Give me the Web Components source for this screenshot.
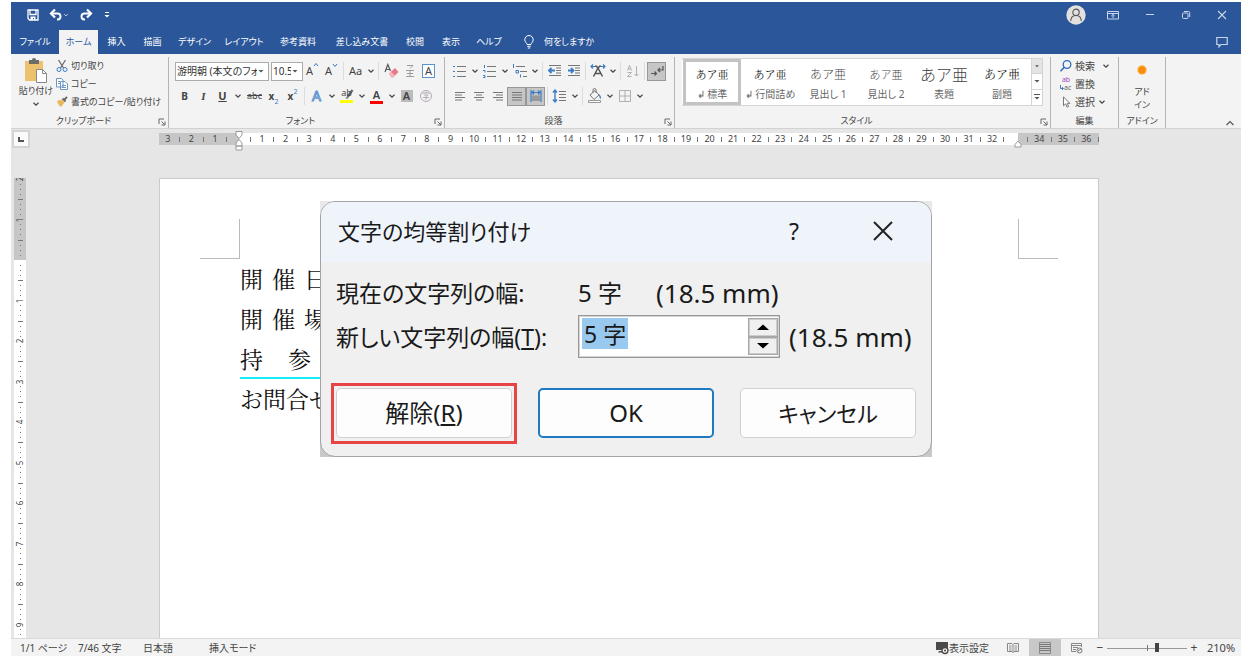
<!DOCTYPE html>
<html lang="ja">
<head>
<meta charset="utf-8">
<title>Word - 文字の均等割り付け</title>
<style>
  body { margin: 0; background: #fff; color: #444; font: 10px/14px "Noto Sans", "Noto Sans CJK JP", sans-serif; font-feature-settings: "palt"; }
</style>
</head>
<body>
<word-app></word-app>

<script>
const RESET = `
  *, *::before, *::after { box-sizing: border-box; }
  button { appearance: none; border: 0; padding: 0; margin: 0; background: none; color: inherit; font: inherit; font-feature-settings: inherit; cursor: default; white-space: nowrap; }
  svg { display: block; flex: none; fill: none; }
`;
class Base extends HTMLElement {
  connectedCallback() {
    if (this.shadowRoot) return;
    const t = document.createElement('template');
    t.innerHTML = `<style>${RESET}${this.css ? this.css() : ''}</style>${this.html()}`;
    this.attachShadow({ mode: 'open' }).append(t.content.cloneNode(true));
  }
  attr(n, d = '') { return this.getAttribute(n) ?? d; }
}

/* ---------- icons ---------- */
const B = '#3b7cc4';
const lines = (x1, x2, ys, c = '#777') => `<path stroke="${c}" d="${ys.map(y => `M${x1} ${y}H${x2}`).join('')}"/>`;
const ICONS = {
  save: ['0 0 12 12', `<path stroke="#fff" stroke-width="1.3" d="M1 1h10v10H2.500L1 9.500zM3 1v4.500h6V1"/><path fill="#fff" d="M3.500 7.500h5V11H7V9H6v2H3.500z"/>`],
  undo: ['0 0 14 14', `<path stroke="#fff" stroke-width="1.900" d="M2 5.500h6.500a3 3 0 0 1 0 6H8"/><path stroke="#fff" stroke-width="2.200" d="M6 1.500l-4 4 4 4"/>`],
  redo: ['0 0 14 14', `<path stroke="#fff" stroke-width="1.900" d="M12 5.500H5.500a3 3 0 0 0 0 6H6"/><path stroke="#fff" stroke-width="2.200" d="M8 1.500l4 4-4 4"/>`],
  more: ['0 0 8 8', `<path stroke="#fff" d="M2 1.500h4"/><path fill="#fff" d="M1.500 4h5L4 6.500z"/>`],
  chev: ['0 0 8 8', `<path stroke="currentColor" stroke-width="1.200" d="M1.500 2.800L4 5.200l2.500-2.400"/>`],
  caret: ['0 0 8 8', `<path fill="#555" d="M1.500 3h5L4 5.500z"/>`],
  caretbar: ['0 0 8 8', `<path stroke="#555" d="M1 1.500h6"/><path fill="#555" d="M1.500 4h5L4 6.500z"/>`],
  up: ['0 0 10 10', `<path stroke="#555" stroke-width="1.200" d="M1.500 7L5 3.500 8.500 7"/>`],
  user: ['0 0 20 20', `<circle cx="10" cy="10" r="9.700" fill="#e3e1df"/><circle cx="10" cy="7.300" r="3.200" stroke="#555" stroke-width="1.100"/><path stroke="#555" stroke-width="1.100" d="M4.800 16c0-3.800 2.200-5.500 5.200-5.500s5.200 1.700 5.200 5.500"/>`],
  ribbonopt: ['0 0 12 12', `<path stroke="#c8d5ea" d="M.5 2.500h11v7.500H.500zM.5 4.500h11M6 9V5.500M4.300 7L6 5.500 7.700 7"/>`],
  min: ['0 0 10 10', `<path stroke="#c8d5ea" d="M1 4.500h8"/>`],
  restore: ['0 0 10 10', `<rect x="1.500" y="3" width="5.500" height="5.500" rx="1" stroke="#c8d5ea"/><path stroke="#c8d5ea" d="M3 1.500h4.500a1.200 1.200 0 0 1 1.200 1.200V7"/>`],
  close: ['0 0 10 10', `<path stroke="#c8d5ea" stroke-width="1.100" d="M1 1l8 8M9 1L1 9"/>`],
  comment: ['0 0 12 12', `<path stroke="#c8d5ea" stroke-width="1.200" d="M.800 1.500h10.400v7H5L3 10.800V8.500H.800z"/>`],
  bulb: ['0 0 12 14', `<path stroke="#fff" d="M4 9.500C4 8 1.800 7.200 1.800 4.700a4.200 4.200 0 0 1 8.400 0C10.200 7.200 8 8 8 9.500zM4.300 11.300h3.400M4.800 13h2.400"/>`],
  paste: ['0 0 24 26', `<path fill="#ecc26e" d="M1 3h18v20H1z"/><path fill="#6b6b6b" d="M5 2h3a2 2 0 0 1 4 0h3v4H5z"/><path fill="#fff" stroke="#888" d="M12.500 11.500h6l4 4v9h-10z"/><path stroke="#888" d="M18.500 11.500v4h4"/>`],
  cut: ['0 0 12 12', `<path stroke="#666" stroke-width="1.200" d="M2.500 0l5 8M9.500 0l-5 8"/><circle cx="3" cy="9.500" r="2" stroke="${B}"/><circle cx="9" cy="9.500" r="2" stroke="${B}"/>`],
  copy: ['0 0 12 12', `<path fill="#fff" stroke="#6d95c6" d="M.500 .500h5l1.500 1.500v7H.500zM4.500 3.500H9l2.500 2.500v5.500h-7z"/><path stroke="#6d95c6" d="M2 3.500h2M2 5.500h2M6 7.500h4M6 9.500h4"/>`],
  brush: ['0 0 12 12', `<path fill="#ecb75a" d="M1 5l4.500-1.500 3 3L5 11C3.500 10 1.500 8 1 5z"/><path stroke="#666" stroke-width="1.800" d="M6.500 2.500l3 3M8 4l3-3"/>`],
  launcher: ['0 0 8 8', `<path stroke="#666" d="M1 6V1h5"/><path stroke="#666" d="M3.500 3.500L7 7M7 3.500V7H3.500"/>`],
  search: ['0 0 12 12', `<circle cx="7" cy="4.500" r="3.800" stroke="#2b6cb8" stroke-width="1.300"/><path stroke="#2b6cb8" stroke-width="1.500" d="M4.300 7.200L.500 11.300"/>`],
  cursor: ['0 0 12 12', `<path stroke="#777" fill="#fff" d="M3.500 .800v9l2.200-2 1.400 3.400 1.500-.7-1.400-3.100h2.600z"/>`],
  hook: ['0 0 4 6', `<path stroke="${B}" d="M.500 0v3.500H3M2 2l1.500 1.500L2 5"/>`],
  dot: ['0 0 12 12', `<circle cx="6" cy="6" r="4.700" fill="#ffb84d"/><circle cx="6" cy="6" r="3.700" fill="#f98c0a"/>`],
  grow: ['0 0 6 6', `<path stroke="${B}" d="M1 4l2-2.500L5 4"/>`],
  shrink: ['0 0 6 6', `<path stroke="${B}" d="M1 2l2 2.500L5 2"/>`],
  eraser: ['0 0 16 16', `<path stroke="#555" stroke-width="1.200" d="M2 9L4.800 1.500 7.500 8M3 6.500h3.500"/><path fill="#e8798a" d="M6 10.500l6-5.500 3.500 4-5.500 5.500H8.500z"/><path fill="#f6b6bf" d="M6 10.500L8 8.600l3.700 4-1.700 1.900H8.500z"/>`],
  ruby: ['0 0 16 16', `<path stroke="#9b9b9b" d="M5 2.500h6L8 5.500M4 7.500h8M5 10.500h6M4 13.500h8M8 7v7"/>`],
  marker: ['0 0 16 16', `<path stroke="#666" stroke-width="2.200" d="M13.500 2L8.500 9"/><path fill="#777" d="M6 10l3.500-1.500L8.500 11z"/><path fill="#ffff00" d="M1 12h13v3H1z"/>`],
  bullets: ['0 0 16 16', `<path fill="${B}" d="M1 3h2v1H1zM1 8h2v1H1zM1 13h2v1H1z"/>` + lines(5, 14, [3.5, 8.5, 13.5])],
  numbers: ['0 0 16 16', `<path stroke="${B}" d="M2.500 2v3M1 7.500h2v2M1 12.500h2v2H1"/>` + lines(5, 14, [3.5, 8.5, 13.5])],
  multi: ['0 0 16 16', `<path stroke="${B}" d="M1.500 1v4M4 7.500h2.500V10H4zM8.500 11.500v3"/>` + lines(4, 13, [3.5]) + lines(8, 15, [8.5]) + lines(11, 15, [13.5])],
  outdent: ['0 0 16 16', lines(2, 14, [2.5, 12.5]) + lines(9, 14, [5, 7.5, 10]) + `<path stroke="${B}" stroke-width="1.800" d="M8 7.500H2M4.500 5L2 7.500 4.500 10"/>`],
  indent: ['0 0 16 16', lines(2, 14, [2.5, 12.5]) + lines(9, 14, [5, 7.5, 10]) + `<path stroke="${B}" stroke-width="1.800" d="M2 7.500h5.500M5 5l2.500 2.500L5 10"/>`],
  scale: ['0 0 16 16', `<path stroke="${B}" stroke-width="1.200" d="M1 3.500h5M10 3.500h5M3 1.500l-2 2 2 2M13 1.500l2 2-2 2"/><path stroke="#555" stroke-width="1.500" d="M3.500 13.500L8 5l4.500 8.500M5.500 10.500h5M8 5L5.500 2.500M8 5l2.500-2.500"/>`],
  sort: ['0 0 16 16', `<path stroke="#b0b0b0" d="M2.500 7.500l2-5 2 5M3 6h3M2.500 9.500h4L2.500 13.500h4M11.500 3v10M9.500 11l2 2 2-2"/>`],
  mark: ['0 0 16 16', `<path stroke="#555" stroke-width="1.200" d="M14 3v4H9M11 5L9 7l2 2M2 10.500h5M5.500 8.500l2 2-2 2"/>`],
  left: ['0 0 16 16', lines(3, 13, [4.5, 9.5]) + lines(3, 10, [7, 12])],
  center: ['0 0 16 16', lines(3, 13, [4.5, 9.5]) + lines(5, 11, [7, 12])],
  right: ['0 0 16 16', lines(3, 13, [4.5, 9.5]) + lines(6, 13, [7, 12])],
  justify: ['0 0 16 16', lines(3, 13, [4.5, 7, 9.5, 12])],
  distribute: ['0 0 16 16', `<path stroke="${B}" stroke-width="1.200" d="M3 2v12M13 2v12M4 4.500h8M6 2.500l-2 2 2 2M10 2.500l2 2-2 2"/><path fill="#999" d="M4 7.500h8V13H4z"/>`],
  spacing: ['0 0 16 16', `<path stroke="${B}" stroke-width="1.400" d="M3 2v12M1 4.500L3 2l2 2.500M1 11.500L3 14l2-2.500"/>` + lines(7, 14, [3.5, 6.5, 9.5, 12.5])],
  paint: ['0 0 16 16', `<path stroke="#777" d="M3 7l5-4.500L12 7l-5 4.500zM6 5V2a1.500 1.500 0 0 1 3 0v3"/><path fill="${B}" d="M12 6c2 2 2.500 3.500 1.500 5-1-.5-1.500-3-1.500-5z"/><path stroke="#999" fill="#fff" d="M1.500 12.500h12v2h-12z"/>`],
  border: ['0 0 16 16', `<path stroke="#b0b0b0" d="M2.500 2.500h11v11h-11zM8 2.500v11M2.500 8h11"/>`],
  circlechar: ['0 0 16 16', `<circle cx="8" cy="8" r="5.500" stroke="#b5acb5"/><path stroke="#b5acb5" d="M5 6V5h6v1M8 3.500V5M6 7h4L8 8.500V12M5 9.500h6"/>`],
  monitor: ['0 0 14 14', `<path fill="#4a4a4a" d="M1 1h12v8H1zM4 10h4v1.500H3z"/><circle cx="10" cy="9.500" r="3" fill="#eee" stroke="#4a4a4a" stroke-width="1.300"/><circle cx="10" cy="9.500" r="1" fill="#4a4a4a"/>`],
  read: ['0 0 12 12', `<path stroke="#888" d="M.500 1.500h4.500l1 1 1-1h4.500v8H7l-1 1-1-1H.500zM6 2.500v8M2 4h2.500M2 6h2.500M2 8h2.500M7.500 4H10M7.500 6H10M7.500 8H10"/>`],
  print: ['0 0 12 12', `<path stroke="#888" d="M.500 .500h11v11H.500z"/><path stroke="#777" d="M1 2.500h10M1 4.500h10M1 6.500h10M1 8.500h10"/>`],
  web: ['0 0 12 12', `<path stroke="#888" d="M5 9.500H.500v-8h10V5M.500 3.500h10M2 5.500h5M2 7.500h3"/><circle cx="8.500" cy="8.500" r="2.500" stroke="#777"/><path stroke="#777" d="M7 9l3-2"/>`],
  bigclose: ['0 0 24 24', `<path stroke="#222" stroke-width="2" d="M3 3l18 18M21 3L3 21"/>`],
  spinup: ['0 0 16 8', `<path fill="#000" d="M2 7l6-5.500L14 7z"/>`],
  spindown: ['0 0 16 8', `<path fill="#000" d="M2 1l6 5.500L14 1z"/>`],
  tabstop: ['0 0 8 8', `<path stroke="#555" stroke-width="2" d="M2 2v4h5"/>`],
  indentmark: ['0 0 8 20', `<path fill="#fff" stroke="#999" d="M1 .500h6V4L4 7.500 1 4zM1 15v-3l3-3.500L7 12v3zM1 15h6v4H1z"/>`],
  indentright: ['0 0 8 8', `<path fill="#fff" stroke="#999" d="M1 7V4.500L4 1l3 3.500V7z"/>`],
};
customElements.define('ui-icon', class extends Base {
  css() { return `:host { display: block; flex: none; }`; }
  html() {
    const [vb, body] = ICONS[this.attr('name')];
    const [, , w, h] = vb.split(' ');
    return `<svg viewBox="${vb}" width="${this.attr('w', w)}" height="${this.attr('h', h)}" aria-hidden="true">${body}</svg>`;
  }
});

/* ---------- title bar ---------- */
customElements.define('title-bar', class extends Base {
  css() { return `
    :host { display: flex; justify-content: space-between; height: 28px; background: #2b579a; color: #c8d5ea; }
    div { display: flex; align-items: center; padding-bottom: 2px; }
    .quick { padding-left: 16px; gap: 10px; }
    .quick button { display: flex; align-items: center; }
    .win { padding-right: 14px; gap: 21px; }
    .win button:not(:first-child, :last-child) { padding-right: 5px; }`; }
  html() { return `
    <div class="quick">
      <button aria-label="保存"><ui-icon name="save"></ui-icon></button>
      <button aria-label="元に戻す"><ui-icon name="undo"></ui-icon><ui-icon name="chev" w="6" h="6"></ui-icon></button>
      <button aria-label="やり直し"><ui-icon name="redo"></ui-icon></button>
      <button aria-label="カスタマイズ"><ui-icon name="more"></ui-icon></button>
    </div>
    <div class="win">
      <button aria-label="アカウント"><ui-icon name="user"></ui-icon></button>
      <button aria-label="リボンの表示オプション"><ui-icon name="ribbonopt"></ui-icon></button>
      <button aria-label="最小化"><ui-icon name="min"></ui-icon></button>
      <button aria-label="元に戻す (縮小)"><ui-icon name="restore"></ui-icon></button>
      <button aria-label="閉じる"><ui-icon name="close"></ui-icon></button>
    </div>`; }
});

/* ---------- ribbon tabs ---------- */
customElements.define('ribbon-tabs', class extends Base {
  css() { return `
    :host { display: flex; justify-content: space-between; height: 24px; background: #2b579a; color: #fff; font-size: 9px; }
    nav { display: grid; grid-template-columns: 48px 39px 37px 35px 49px 50px 58px 70px 36px 36px 40px auto; }
    button[aria-selected=true] { background: #f3f3f3; color: #2b579a; }
    .tell { display: flex; align-items: center; gap: 9px; padding-left: 14px; }
    .note { padding-right: 13px; }`; }
  html() {
    const tabs = ['ファイル','ホーム','挿入','描画','デザイン','レイアウト','参考資料','差し込み文書','校閲','表示','ヘルプ'];
    return `<nav role="tablist">${tabs.map((t, i) => `<button role="tab" aria-selected="${i === 1}">${t}</button>`).join('')}
      <button class="tell"><ui-icon name="bulb"></ui-icon>何をしますか</button></nav>
      <button class="note" aria-label="コメント"><ui-icon name="comment"></ui-icon></button>`; }
});

/* ---------- ribbon parts ---------- */
customElements.define('ribbon-group', class extends Base {
  css() { return `
    :host { display: flex; flex-direction: column; height: 71px; border-right: 1px solid #b4b4b4; }
    .body { flex: 1; display: flex; min-width: 0; }
    footer { display: flex; align-items: center; height: 14px; font-size: 9px; }
    footer span { flex: 1; text-align: center; white-space: nowrap; }
    footer button { width: 12px; display: grid; place-items: center; padding-top: 2px; }`; }
  html() { return `<div class="body"><slot></slot></div>
    <footer><span>${this.attr('label')}</span>${this.hasAttribute('launcher') ? `<button aria-label="${this.attr('label')}の設定"><ui-icon name="launcher"></ui-icon></button>` : ''}</footer>`; }
});
customElements.define('tool-row', class extends Base {
  css() { return `:host { display: flex; align-items: center; height: 20px; }`; }
  html() { return `<slot></slot>`; }
});
customElements.define('tool-sep', class extends Base {
  css() { return `:host { width: 1px; height: 18px; margin: 0 2px; background: #dcdcdc; }`; }
  html() { return ``; }
});
customElements.define('tool-button', class extends Base {
  css() { return `
    :host { display: block; flex: none; }
    button { display: flex; align-items: center; height: 19px; font-size: 11px; line-height: 16px; }
    .face { display: flex; align-items: center; justify-content: center; width: 19px; height: 19px; }
    :host([split]) .chev { width: 11px; display: grid; place-items: center; }
    :host([on]) .face { background: #c6c6c6; border: 1px solid #979797; }`; }
  html() {
    const icon = this.attr('icon');
    return `<button aria-label="${this.attr('label')}"><span class="face"><slot></slot>${icon ? `<ui-icon name="${icon}"></ui-icon>` : ''}</span>${this.hasAttribute('split') ? '<span class="chev"><ui-icon name="chev"></ui-icon></span>' : ''}</button>`; }
});
customElements.define('combo-box', class extends Base {
  css() { return `
    :host { display: grid; grid-template-columns: 1fr 11px; align-items: center; width: ${this.attr('w')}px; height: 19px; flex: none; background: #fff; border: 1px solid #ababab; }
    select { grid-row: 1; grid-column: 1; width: 100%; min-width: 0; height: 17px; appearance: none; border: 0; margin: 0; padding: 0 0 0 1px; background: none; color: #333; font: inherit; font-feature-settings: inherit; overflow: hidden; text-overflow: clip; }`; }
  html() { return `<select aria-label="${this.attr('label')}"><option>${this.attr('value')}</option></select><ui-icon name="caret"></ui-icon>`; }
});
customElements.define('text-command', class extends Base {
  css() { return `
    :host { display: block; }
    button { display: flex; align-items: center; height: 18px; gap: 3px; }
    .chev { padding-left: ${this.attr('chevgap', '2')}px; }`; }
  html() { return `<button><slot name="icon"><ui-icon name="${this.attr('icon', 'copy')}"></ui-icon></slot><slot></slot>${this.hasAttribute('chevgap') ? '<span class="chev"><ui-icon name="chev"></ui-icon></span>' : ''}</button>`; }
});
customElements.define('style-card', class extends Base {
  css() { return `
    :host { display: block; width: 58px; }
    button { display: flex; flex-direction: column; align-items: center; justify-content: center; gap: 5px; width: 100%; height: 46px; padding-top: 3px; border: 3px solid transparent; }
    :host([selected]) button { border-color: #c3c3c3; }
    b { font-family: "Noto Serif CJK JP", "Noto Sans CJK JP", serif; font-weight: 400; color: #222; font-size: ${this.attr('size', '11')}px; height: 16px; line-height: 16px; font-feature-settings: normal; }
    .light { font-family: "Noto Sans CJK JP", sans-serif; color: #444; font-weight: 300; }
    span { color: #666; }`; }
  html() { return `<button><b class="${this.hasAttribute('light') ? 'light' : ''}">あア亜</b><span><slot></slot></span></button>`; }
});

customElements.define('ribbon-bar', class extends Base {
  css() { return `
    :host { display: flex; background: #f3f3f3; border-bottom: 1px solid #d2d2d2; padding-top: 3px; }
    .clip { width: 158px; font-size: 9px; } .font { width: 276px; } .para { width: 230px; } .styles { width: 376px; } .edit { width: 68px; } .addin { width: 47px; }
    .tools { display: flex; flex-direction: column; gap: 5px; padding: 4px 0 0 6px; }
    .para .tools { padding-left: 5px; }
    .paste { display: flex; flex-direction: column; align-items: center; width: 38px; margin: 1px 1px 0 6px; }
    .paste ui-icon:last-child { margin-top: 2px; }
    .rows { padding-left: 9px; }
    .clip .rows { padding-left: 0; }
    .gap { width: 2px; }
    b.s { font-size: 10px; }
    i { font-family: "Liberation Serif", serif; font-weight: 700; }
    u { font-weight: 700; } s { font-size: 9px; }
    sub, sup { color: #3b7cc4; font-size: 7px; line-height: 9px; }
    sub { align-self: flex-end; } sup { align-self: flex-start; }
    .fx { color: #fff; -webkit-text-stroke: 1px #5b93d0; font-size: 14px; }
    .clr { border-bottom: 3px solid #f00; line-height: 12px; padding: 0 3px; font-weight: 600; }
    .box { border: 1px solid #5b93d0; background: #fff; width: 13px; line-height: 12px; text-align: center; }
    .shade { background: #bbb; width: 12px; line-height: 12px; text-align: center; font-weight: 600; }
    .hl { display: grid; } .hl > * { grid-area: 1 / 1; } .hl span { font-size: 9px; line-height: 10px; }
    .gallery { display: flex; height: 48px; margin: 1px 0 0 7px; padding: 0 0 0 1px; border: 1px solid #d4d4d4; background: #fff; border-width: 1px 0; }
    .scroll { display: grid; grid-template-rows: repeat(3, 1fr); width: 12px; border: 1px solid #d4d4d4; border-width: 0 1px; }
    .scroll button { display: grid; place-items: center; border-bottom: 1px solid #d4d4d4; overflow: hidden; }
    .scroll button:first-child { background: #e4e4e4; }
    .scroll button:last-child { border: 0; }
    .rep { display: flex; flex-direction: column; font-size: 7px; line-height: 8px; width: 12px; color: #666; } .rep em { font-style: normal; color: #a349c2; }
    .rep span { display: flex; align-items: center; }
    .app { display: flex; flex-direction: column; align-items: center; width: 100%; padding-top: 7px; font-size: 9px; }
    .app span { line-height: 13px; } .app span:first-of-type { margin-top: 9px; }
    .rest { flex: 1; display: flex; justify-content: flex-end; align-items: flex-end; padding-right: 6px; }`; }
  html() { return `
    <ribbon-group class="clip" label="クリップボード" launcher>
      <button class="paste"><ui-icon name="paste"></ui-icon>貼り付け<ui-icon name="chev"></ui-icon></button>
      <div class="rows">
        <text-command icon="cut">切り取り</text-command>
        <text-command icon="copy">コピー</text-command>
        <text-command icon="brush">書式のコピー/貼り付け</text-command>
      </div>
    </ribbon-group>
    <ribbon-group class="font" label="フォント" launcher>
      <div class="tools">
        <tool-row>
          <combo-box w="94" label="フォント" value="游明朝 (本文のフォント)"></combo-box><span class="gap"></span>
          <combo-box w="32" label="フォント サイズ" value="10.5"></combo-box>
          <tool-button label="フォントの拡大">A<ui-icon name="grow" style="align-self:flex-start"></ui-icon></tool-button>
          <tool-button label="フォントの縮小">A<ui-icon name="shrink" style="align-self:flex-start"></ui-icon></tool-button><tool-sep></tool-sep>
          <tool-button split label="文字種の変換"><span>Aa</span></tool-button><tool-sep></tool-sep>
          <tool-button icon="eraser" label="書式のクリア"></tool-button>
          <tool-button icon="ruby" label="ルビ"></tool-button>
          <tool-button label="囲み線"><span class="box">A</span></tool-button>
        </tool-row>
        <tool-row>
          <tool-button label="太字"><b class="s">B</b></tool-button>
          <tool-button label="斜体"><i>I</i></tool-button>
          <tool-button split label="下線"><u>U</u></tool-button><span class="gap"></span>
          <tool-button label="取り消し線"><s>abc</s></tool-button>
          <tool-button label="下付き"><b class="s">x</b><sub>2</sub></tool-button>
          <tool-button label="上付き"><b class="s">x</b><sup>2</sup></tool-button><tool-sep></tool-sep>
          <tool-button split label="文字の効果"><span class="fx">A</span></tool-button>
          <tool-button split label="蛍光ペン"><span class="hl"><ui-icon name="marker"></ui-icon><span>ab</span></span></tool-button>
          <tool-button split label="フォントの色"><span class="clr">A</span></tool-button>
          <tool-button label="文字の網かけ"><span class="shade">A</span></tool-button>
          <tool-button icon="circlechar" label="囲い文字"></tool-button>
        </tool-row>
      </div>
    </ribbon-group>
    <ribbon-group class="para" label="段落" launcher>
      <div class="tools">
        <tool-row>
          <tool-button split icon="bullets" label="箇条書き"></tool-button>
          <tool-button split icon="numbers" label="段落番号"></tool-button>
          <tool-button split icon="multi" label="アウトライン"></tool-button><tool-sep></tool-sep>
          <tool-button icon="outdent" label="インデントを減らす"></tool-button>
          <tool-button icon="indent" label="インデントを増やす"></tool-button><tool-sep></tool-sep>
          <tool-button split icon="scale" label="拡張書式"></tool-button><tool-sep></tool-sep>
          <tool-button icon="sort" label="並べ替え"></tool-button><tool-sep></tool-sep>
          <tool-button on icon="mark" label="編集記号の表示"></tool-button>
        </tool-row>
        <tool-row>
          <tool-button icon="left" label="左揃え"></tool-button>
          <tool-button icon="center" label="中央揃え"></tool-button>
          <tool-button icon="right" label="右揃え"></tool-button>
          <tool-button on icon="justify" label="両端揃え"></tool-button>
          <tool-button on icon="distribute" label="均等割り付け"></tool-button><tool-sep></tool-sep>
          <tool-button split icon="spacing" label="行間"></tool-button><tool-sep></tool-sep>
          <tool-button split icon="paint" label="塗りつぶし"></tool-button>
          <tool-button split icon="border" label="罫線"></tool-button>
        </tool-row>
      </div>
    </ribbon-group>
    <ribbon-group class="styles" label="スタイル" launcher>
      <div class="gallery">
        <style-card selected>↲ 標準</style-card><style-card>↲ 行間詰め</style-card>
        <style-card light size="12">見出し 1</style-card><style-card light>見出し 2</style-card>
        <style-card light size="16">表題</style-card><style-card size="12">副題</style-card>
        <div class="scroll"><button aria-label="前の行"><ui-icon name="caret" w="6" h="6"></ui-icon></button><button aria-label="次の行"><ui-icon name="caret"></ui-icon></button><button aria-label="その他"><ui-icon name="caretbar"></ui-icon></button></div>
      </div>
    </ribbon-group>
    <ribbon-group class="edit" label="編集">
      <div class="rows">
        <text-command icon="search" chevgap="4">検索</text-command>
        <text-command><span slot="icon" class="rep"><em>ab</em><span><ui-icon name="hook"></ui-icon>ac</span></span>置換</text-command>
        <text-command icon="cursor" chevgap="0">選択</text-command>
      </div>
    </ribbon-group>
    <ribbon-group class="addin" label="アドイン">
      <button class="app"><ui-icon name="dot"></ui-icon><span>アド</span><span>イン</span></button>
    </ribbon-group>
    <div class="rest"><button aria-label="リボンを折りたたむ"><ui-icon name="up"></ui-icon></button></div>`; }
});

/* ---------- rulers ---------- */
customElements.define('h-ruler', class extends Base {
  css() { return `
    :host { display: block; position: relative; width: 940px; height: 12px; background: linear-gradient(to right, #c6c6c6 80px, #fff 80px, #fff 859px, #c6c6c6 859px); }
    .marks { display: grid; grid-template-columns: repeat(80, 1fr); margin: 0 -5px 0 3px; }
    .marks span { display: flex; justify-content: center; align-items: center; min-width: 0; height: 12px; font-size: 9px; line-height: 12px; white-space: nowrap; }
    .tick::before { content: ""; width: 1px; height: 5px; background: #777; }
    .l, .r { position: absolute; } .l { left: 76px; top: -2px; } .r { left: 855px; top: 7px; }`; }
  html() {
    let s = '';
    for (let n = -3; n <= 36; n++) s += `<span>${n === 0 || n === 33 ? '' : Math.abs(n)}</span><span class="tick"></span>`;
    return `<div class="marks">${s}</div><ui-icon class="l" name="indentmark"></ui-icon><ui-icon class="r" name="indentright"></ui-icon>`; }
});
customElements.define('v-ruler', class extends Base {
  css() { return `
    :host { display: block; width: 12px; overflow: hidden; background: linear-gradient(#c6c6c6 82px, #fff 82px); }
    .marks { display: grid; grid-auto-rows: 40px 41px; margin-top: -19px; height: 0; }
    .marks div { display: grid; } .marks div > * { grid-area: 1 / 1; }
    span { place-self: center; font-size: 8px; line-height: 10px; transform: rotate(-90deg); }`; }
  html() {
    const last = Math.floor((innerHeight - 281) / 40.5);
    let s = '';
    for (let n = -2; n <= last; n++) s += `<div><svg width="12" height="40"><path stroke="#777" d="M4 .500h5M6 5.500h1M6 10.500h1M6 15.500h1M6 25.500h1M6 30.500h1M6 35.500h1"/></svg><span>${n ? Math.abs(n) : ''}</span></div>`;
    return `<div class="marks">${s}</div>`; }
});

/* ---------- document ---------- */
customElements.define('doc-page', class extends Base {
  css() { return `
    :host { display: block; position: relative; border: 1px solid #cacaca; border-bottom: 0; background: #fff; padding: 80px; }
    .c { position: absolute; top: 40px; width: 40px; height: 40px; border: 0 solid #bbb; border-bottom-width: 1px; }
    .c.a { left: 40px; border-right-width: 1px; } .c.b { right: 40px; border-left-width: 1px; }
    p { margin: 0; height: 40px; font: 400 23px/40px "Noto Serif CJK JP", "Noto Sans CJK JP", serif; color: #111; font-feature-settings: normal; white-space: nowrap; }
    span { display: inline-block; vertical-align: top; height: 40px; text-align: justify; text-align-last: justify; }
    .three { width: 87px; } .two { width: 71px; }
    mark { display: block; width: 118px; height: 40px; color: inherit; background: none; border-bottom: 2px solid #12eef6; }`; }
  html() { return `<div class="c a"></div><div class="c b"></div>
    <p><span class="three">開催日</span></p><p><span class="three">開催場</span></p>
    <p><mark><span class="two">持参</span></mark></p><p>お問合せ</p>`; }
});

/* ---------- dialog ---------- */
customElements.define('distribute-dialog', class extends Base {
  css() { return `
    :host { display: block; width: 612px; background: linear-gradient(#e8e8e8 50%, #c9c9c9 50%); color: #1a1a1a; font-size: 23px; line-height: 32px; }
    section { border: 1px solid #a3a3a3; border-radius: 15px; background: #f0f0f0; overflow: hidden; }
    header { display: flex; align-items: center; height: 60px; padding: 0 34px 2px 17px; background: #eff3fa; }
    h1 { flex: 1; margin: 0; font: inherit; font-size: 22px; }
    header button { width: 28px; display: grid; place-items: center; }
    header button + button { margin-left: 61px; }
    .form { display: grid; grid-template-columns: 242px 202px auto; align-items: center; padding: 8px 15px 0; grid-template-rows: 45px 43px; }
    .mm { font-size: 26px; padding-left: 9px; }
    .now { grid-column: 2 / 4; display: flex; gap: 34px; font-size: 24px; } .now .mm { padding: 0; }
    .spin { display: grid; grid-template-columns: 1fr 30px; height: 43px; border: 1px solid #979797; outline: 1px solid #d5d5d5; outline-offset: -2px; background: #fff; padding: 2px 1px 2px 3px; }
    .field { display: grid; align-items: start; }
    input { width: 100%; min-width: 0; height: 31px; border: 0; margin: 0; padding: 0 2px; font: inherit; color: #1a1a1a; background: linear-gradient(to right, #99c9ef 46px, #fff 46px); outline: 0; }
    .arrows { display: grid; grid-template-rows: 1fr 1fr; }
    .arrows button { display: grid; place-items: center; border: 1px solid #a6a6a6; outline: 1px solid #ccc; outline-offset: -2px; background: #f0f0f0; }
    .acts { display: grid; grid-template-columns: 176px 176px 176px; gap: 26px; padding: 30px 15px 18px; }
    .acts button { height: 50px; border: 1px solid #d0d0d0; border-radius: 5px; background: #fdfdfd; font-size: 24px; }
    .acts .ok { border: 2px solid #1f7ac0; }
    .acts .cancel { font-size: 22px; }
    .ring { display: grid; position: relative; }
    .ring::after { content: ""; position: absolute; inset: -5px -5px -6px -5px; border: 3px solid #e84445; pointer-events: none; }`; }
  html() { return `<section role="dialog" aria-labelledby="t">
    <header><h1 id="t">文字の均等割り付け</h1><button aria-label="ヘルプ">?</button><button aria-label="閉じる"><ui-icon name="bigclose"></ui-icon></button></header>
    <div class="form">
      <span>現在の文字列の幅:</span><span class="now"><span>5 字</span><span class="mm">(18.5 mm)</span></span>
      <label for="w">新しい文字列の幅(<u>T</u>):</label>
      <div class="spin"><div class="field"><input id="w" value="5 字"></div><div class="arrows"><button aria-label="増やす"><ui-icon name="spinup"></ui-icon></button><button aria-label="減らす"><ui-icon name="spindown"></ui-icon></button></div></div>
      <span class="mm">(18.5 mm)</span>
    </div>
    <div class="acts"><div class="ring"><button>解除(<u>R</u>)</button></div><button class="ok">OK</button><button class="cancel">キャンセル</button></div>
  </section>`; }
});

/* ---------- workspace ---------- */
customElements.define('work-space', class extends Base {
  css() { return `
    :host { display: grid; position: relative; min-height: 0; overflow: hidden; background: #e6e6e6; grid-template: 49px 1fr / 16px 1fr 10px; }
    .corner { display: grid; place-items: center; width: 18px; height: 18px; margin: 1px 0 0 1px; border: 2px solid #d4d4d4; background: #fafafa; }
    .top { display: flex; justify-content: center; padding-top: 4px; }
    v-ruler { margin-left: 3px; }
    .canvas { display: flex; justify-content: center; min-height: 0; }
    doc-page { width: 940px; }
    distribute-dialog { position: absolute; top: 72px; left: 50%; transform: translateX(-50%); }`; }
  html() { return `<div class="corner"><ui-icon name="tabstop"></ui-icon></div><div class="top"><h-ruler></h-ruler></div><div></div>
    <v-ruler></v-ruler><div class="canvas"><doc-page></doc-page></div><div></div>
    <distribute-dialog></distribute-dialog>`; }
});

/* ---------- status bar ---------- */
customElements.define('status-bar', class extends Base {
  css() { return `
    :host { display: flex; align-items: center; justify-content: space-between; height: 18px; background: #f3f3f3; border-top: 1px solid #dadada; }
    div { display: flex; align-items: center; height: 17px; }
    .left { padding-left: 9px; display: grid; grid-template-columns: 58px 65px 66px auto; }
    .view { width: 32px; height: 17px; display: grid; place-items: center; }
    .on { background: #c8c8c8; }
    .disp { display: flex; align-items: center; padding-right: 8px; }
    .zoom { display: flex; align-items: center; }
    .zoom button { width: 14px; font-size: 12px; }
    input { appearance: none; width: 80px; height: 12px; margin: 0; background: linear-gradient(#777, #777) 40px 3px / 1px 6px no-repeat, linear-gradient(#999, #999) 0 6px / 100% 1px no-repeat; }
    input::-webkit-slider-thumb { appearance: none; width: 4px; height: 9px; background: #444; }
    output { width: 40px; padding-left: 6px; font-size: 11px; }`; }
  html() { return `<div class="left"><span>1/1 ページ</span><span>7/46 文字</span><span>日本語</span><span>挿入モード</span></div>
    <div><button class="disp"><ui-icon name="monitor"></ui-icon>表示設定</button>
      <button class="view" aria-label="閲覧モード"><ui-icon name="read"></ui-icon></button>
      <button class="view on" aria-label="印刷レイアウト"><ui-icon name="print"></ui-icon></button>
      <button class="view" aria-label="Web レイアウト"><ui-icon name="web"></ui-icon></button>
      <span class="zoom"><button aria-label="縮小">−</button><input type="range" aria-label="ズーム" min="0" max="100" value="63"><button aria-label="拡大">+</button></span>
      <output>210%</output></div>`; }
});

customElements.define('word-app', class extends Base {
  css() { return `
    :host { display: grid; grid-template-rows: auto auto auto 1fr auto; box-sizing: border-box; height: 100vh; padding: 2px 12px 3px 11px; }`; }
  html() { return `<title-bar></title-bar><ribbon-tabs></ribbon-tabs><ribbon-bar></ribbon-bar><work-space></work-space><status-bar></status-bar>`; }
});
</script>
</body>
</html>
